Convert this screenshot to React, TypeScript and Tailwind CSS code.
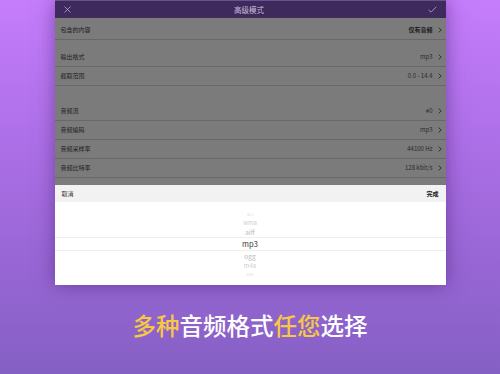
import React from "react";

const font = { fontFamily: '"Noto Sans CJK SC", "Noto Sans", sans-serif' };

function Chevron() {
  return (
    <svg width="4" height="6" viewBox="0 0 4 6" className="ml-[5px]">
      <path d="M0.6 0.6 L3.2 3 L0.6 5.4" fill="none" stroke="#2a2a2a" strokeWidth="0.9" />
    </svg>
  );
}

function Row({ label, value, bold }: { label: string; value: string; bold?: boolean }) {
  return (
    <div className="flex h-[19px] items-center justify-between border-b border-[#686868] pl-[6px] pr-[4px]">
      <span className="text-[6px] text-[#1e1e1e] leading-none">{label}</span>
      <span className="flex items-center">
        <span className={`text-[6px] leading-none ${bold ? "text-[#1a1a1a] font-bold" : "text-[#2a2a2a]"}`}>{value}</span>
        <Chevron />
      </span>
    </div>
  );
}

export default function App() {
  return (
    <div
      className="w-[500px] h-[374px] overflow-hidden flex flex-col items-center bg-gradient-to-b from-[#c57dfc] via-[#a56be0] to-[#8560c4]"
      style={font}
    >
      <div className="w-[391px] h-[285px] flex flex-col shadow-[0_0_18px_rgba(70,30,110,0.55)] bg-[#7b7b7b]">
        <div className="h-[18px] bg-[#3e2a5c] border-t border-[#6b4f8f] flex items-center justify-between px-[9px]">
          <svg width="7" height="7" viewBox="0 0 7 7">
            <path d="M0.5 0.5 L6.5 6.5 M6.5 0.5 L0.5 6.5" stroke="#b9acd0" strokeWidth="0.8" />
          </svg>
          <span className="text-[7.5px] text-[#c9bedb] leading-none">高级模式</span>
          <svg width="9" height="7" viewBox="0 0 9 7">
            <path d="M0.5 3.8 L3 6.2 L8.5 0.6" fill="none" stroke="#b9acd0" strokeWidth="0.8" />
          </svg>
        </div>
        <div className="h-[3px]" />
        <div>
          <Row label="包含的内容" value="仅有音频" bold />
          <div className="h-[8px]" />
          <Row label="输出格式" value="mp3" />
          <Row label="截取范围" value="0.0 - 14.4" />
          <div className="h-[16px]" />
          <Row label="音频流" value="#0" />
          <Row label="音频编码" value="mp3" />
          <Row label="音频采样率" value="44100 Hz" />
          <Row label="音频比特率" value="128 kbit/s" />
        </div>
        <div className="flex-1" />
        <div className="h-[100px] bg-white flex flex-col">
          <div className="h-[17px] bg-[#f2f2f2] flex items-center justify-between px-[7px]">
            <span className="text-[6px] text-[#333] leading-none">取消</span>
            <span className="text-[6px] text-[#222] font-bold leading-none">完成</span>
          </div>
          <div className="flex flex-col items-center text-center">
            <div className="h-[8px]" />
            <div className="h-[8px] flex items-center text-[4px] text-[#e2e2e2] leading-none">ac3</div>
            <div className="h-[9px] flex items-center text-[6px] text-[#cfcfcf] leading-none">wma</div>
            <div className="h-[10px] flex items-center text-[6.5px] text-[#bcbcbc] leading-none">aiff</div>
            <div className="w-full h-[14px] border-y border-[#eeeeee] flex items-center justify-center text-[7.5px] text-[#333] leading-none">mp3</div>
            <div className="h-[10px] flex items-center text-[6.5px] text-[#bcbcbc] leading-none">ogg</div>
            <div className="h-[10px] flex items-center text-[6px] text-[#cfcfcf] leading-none">m4a</div>
            <div className="h-[6px] flex items-center text-[4px] text-[#e2e2e2] leading-none">wav</div>
          </div>
        </div>
      </div>
      <div className="mt-[29px] text-[23.5px] leading-none font-medium text-white">
        <span className="text-[#f7c844]">多种</span>音频格式<span className="text-[#f7c844]">任您</span>选择
      </div>
    </div>
  );
}
